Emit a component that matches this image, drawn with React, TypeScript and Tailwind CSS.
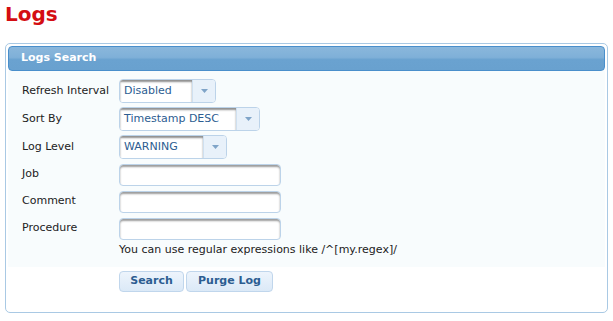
import React from "react";

const font = { fontFamily: '"DejaVu Sans", Verdana, sans-serif' };

function Select({ value, width }: { value: string; width: string }) {
  return (
    <div
      className={`flex h-[24px] ${width} overflow-hidden rounded-[4px] border border-[#bcd3e9] bg-white`}
    >
      <div className="flex flex-1 items-center bg-white pl-[4px] text-[11px] text-[#2c5d91] shadow-[inset_0_2px_2px_#8f8f8f]">
        {value}
      </div>
      <div className="flex w-[23px] items-center justify-center border-l border-[#cfe0f0] bg-[#e8f1fa]">
        <svg width="7" height="4" viewBox="0 0 7 4">
          <path d="M0 0 L7 0 L3.5 4 Z" fill="#7fa4c8" />
        </svg>
      </div>
    </div>
  );
}

function TextInput() {
  return (
    <div className="h-[22px] w-[162px] rounded-[4px] border border-[#bcd3e9] bg-white shadow-[inset_0_2px_2px_#9b9b9b]" />
  );
}

function Row({
  label,
  height,
  children,
}: {
  label: string;
  height: string;
  children: React.ReactNode;
}) {
  return (
    <div className={`flex ${height} items-center`}>
      <div className="w-[97px] text-[11px] text-[#222]">{label}</div>
      {children}
    </div>
  );
}

export default function App() {
  return (
    <div className="min-h-[321px] w-[613px] bg-white" style={font}>
      <h1 className="pl-[5px] pt-[2px] text-[20px] font-bold leading-[24px] text-[#d40d12]">
        Logs
      </h1>
      <div className="mx-[5px] mt-[17px] h-[270px] rounded-[5px] border border-[#a9c9e4] bg-white p-[2px]">
        <div className="flex h-[25px] items-center rounded-[4px] border border-[#4a8fcb] bg-[linear-gradient(to_bottom,#8ab7dc_0%,#7fb0d8_45%,#6aa2d0_55%,#69a1cf_100%)] pl-[12px] text-[11px] font-bold text-white">
          Logs Search
        </div>
        <div className="flex flex-col bg-[#f8fcfd] pb-[9px] pl-[14px] pt-[6px]">
          <Row label="Refresh Interval" height="h-[28px]">
            <Select value="Disabled" width="w-[97px]" />
          </Row>
          <Row label="Sort By" height="h-[28px]">
            <Select value="Timestamp DESC" width="w-[141px]" />
          </Row>
          <Row label="Log Level" height="h-[28px]">
            <Select value="WARNING" width="w-[108px]" />
          </Row>
          <Row label="Job" height="h-[27px]">
            <TextInput />
          </Row>
          <Row label="Comment" height="h-[27px]">
            <TextInput />
          </Row>
          <Row label="Procedure" height="h-[27px]">
            <TextInput />
          </Row>
          <div className="flex h-[16px] items-center pl-[97px] text-[11px] text-[#222]">
            You can use regular expressions like /^[my.regex]/
          </div>
        </div>
        <div className="flex gap-[2px] pl-[111px] pt-[4px]">
          <button className="h-[21px] w-[65px] rounded-[4px] border border-[#c0d6ec] bg-[linear-gradient(to_bottom,#edf4fc,#dbe9f7)] text-[11px] font-bold text-[#2c5d91]">
            Search
          </button>
          <button className="h-[21px] w-[87px] rounded-[4px] border border-[#c0d6ec] bg-[linear-gradient(to_bottom,#edf4fc,#dbe9f7)] text-[11px] font-bold text-[#2c5d91]">
            Purge Log
          </button>
        </div>
      </div>
    </div>
  );
}
